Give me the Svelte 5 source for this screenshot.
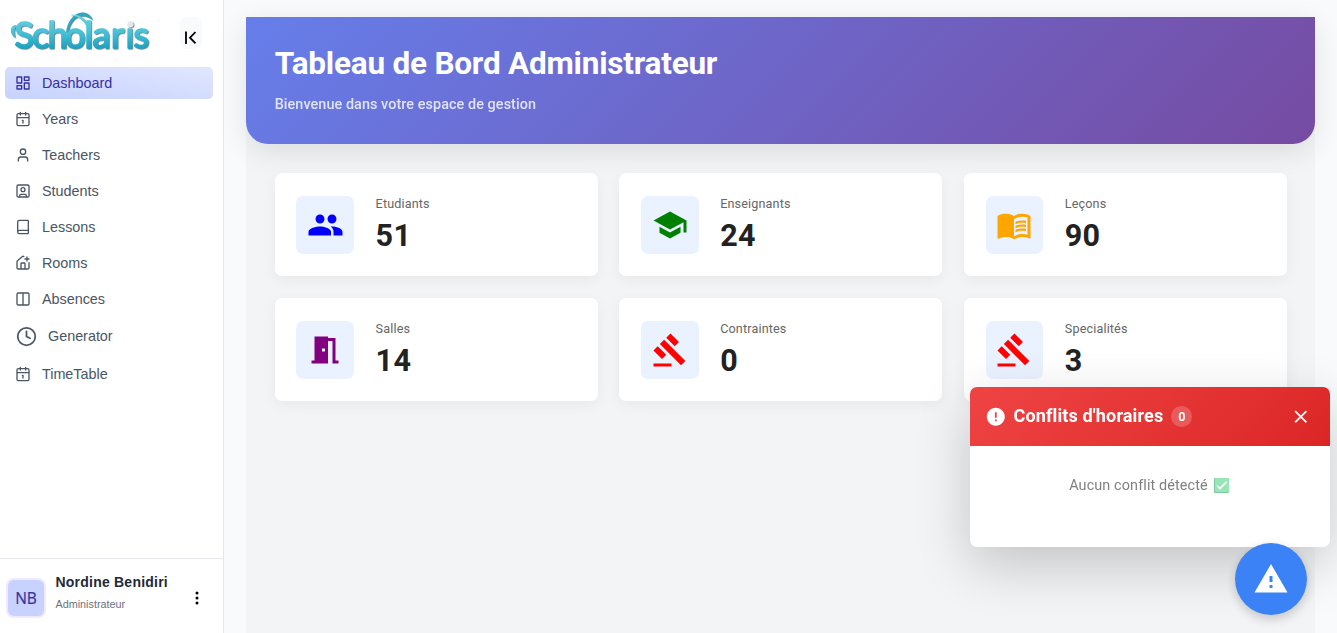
<script>
  const nav = [
    { label: 'Dashboard', icon: 'dashboard', active: true },
    { label: 'Years', icon: 'calendar' },
    { label: 'Teachers', icon: 'user' },
    { label: 'Students', icon: 'student' },
    { label: 'Lessons', icon: 'book' },
    { label: 'Rooms', icon: 'house' },
    { label: 'Absences', icon: 'columns' },
    { label: 'Generator', icon: 'clock' },
    { label: 'TimeTable', icon: 'calendar' }
  ];
  const outline = {
    dashboard: 'M3 3h7v9H3z M14 3h7v5h-7z M14 12h7v9h-7z M3 16h7v5H3z',
    calendar: 'M5 4h14a2 2 0 0 1 2 2v14a2 2 0 0 1-2 2H5a2 2 0 0 1-2-2V6a2 2 0 0 1 2-2z M16 2v4 M3 10h18 M8 2v4 M11 14h1v4',
    user: 'M19 21v-2a4 4 0 0 0-4-4H9a4 4 0 0 0-4 4v2 M16 7a4 4 0 1 1-8 0a4 4 0 0 1 8 0z',
    student: 'M5 3h14a2 2 0 0 1 2 2v14a2 2 0 0 1-2 2H5a2 2 0 0 1-2-2V5a2 2 0 0 1 2-2z M15 10a3 3 0 1 1-6 0a3 3 0 0 1 6 0z M7 21v-2a2 2 0 0 1 2-2h6a2 2 0 0 1 2 2v2',
    book: 'M4 19.5v-15A2.5 2.5 0 0 1 6.5 2H19a1 1 0 0 1 1 1v18a1 1 0 0 1-1 1H6.5a1 1 0 0 1 0-5H20',
    house: 'M13.22 2.416a2 2 0 0 0-2.511.057l-7 5.999A2 2 0 0 0 3 10v9a2 2 0 0 0 2 2h14a2 2 0 0 0 2-2v-7.354 M15 21v-8a1 1 0 0 0-1-1h-4a1 1 0 0 0-1 1v8 M15 6h6 M18 3v6',
    columns: 'M5 3h14a2 2 0 0 1 2 2v14a2 2 0 0 1-2 2H5a2 2 0 0 1-2-2V5a2 2 0 0 1 2-2z M12 3v18',
    clock: 'M22 12a10 10 0 1 1-20 0a10 10 0 0 1 20 0z M12 6v6l4 2'
  };
  const people = 'M8.67 11c1.66 0 2.99-1.34 2.99-3S10.33 5 8.67 5s-3 1.34-3 3 1.34 3 3 3m8 0c1.66 0 2.99-1.34 2.99-3s-1.33-3-2.99-3-3 1.34-3 3 1.34 3 3 3m-8 2C6.33 13 1 14.17 1 16.5V19h15v-2.5c0-2.33-5-3.5-7.33-3.5m8 0c-.29 0-.62.02-.97.05 1.16.84 1.97 1.97 1.97 3.45V19h6v-2.5c0-2.33-4.67-3.5-7-3.5';
  const gavel = 'M1 21h12v2H1zM5.245 8.07l2.83-2.827 14.14 14.142-2.828 2.828zM12.317 1l5.657 5.656-2.83 2.83-5.654-5.66zM3.825 9.485l5.657 5.657-2.828 2.828-5.657-5.657z';
  const cards = [
    { label: 'Etudiants', value: 51, color: '#0000ff', d: people },
    { label: 'Enseignants', value: 24, color: '#008000', d: 'M5 13.18v4L12 21l7-3.82v-4L12 17zM12 3 1 9l11 6 9-4.91V17h2V9z' },
    { label: 'Leçons', value: 90, color: '#ffa500', d: 'M21 5c-1.11-.35-2.33-.5-3.5-.5-1.95 0-4.05.4-5.5 1.5-1.45-1.1-3.55-1.5-5.5-1.5S2.45 4.9 1 6v14.65c0 .25.25.5.5.5.1 0 .15-.05.25-.05C3.1 20.45 5.05 20 6.5 20c1.95 0 4.05.4 5.5 1.5 1.35-.85 3.8-1.5 5.5-1.5 1.65 0 3.35.3 4.75 1.05.1.05.15.05.25.05.25 0 .5-.25.5-.5V6c-.6-.45-1.25-.75-2-1m0 13.5c-1.1-.35-2.3-.5-3.5-.5-1.7 0-4.15.65-5.5 1.5V8c1.35-.85 3.8-1.5 5.5-1.5 1.2 0 2.4.15 3.5.5z M17.5 10.5c.88 0 1.73.09 2.5.26V9.24c-.79-.15-1.64-.24-2.5-.24-1.7 0-3.24.29-4.5.83v1.66c1.13-.64 2.7-.99 4.5-.99M13 12.49v1.66c1.13-.64 2.7-.99 4.5-.99.88 0 1.73.09 2.5.26V11.9c-.79-.15-1.64-.24-2.5-.24-1.7 0-3.24.3-4.5.83m4.5 1.84c-1.7 0-3.24.29-4.5.83v1.66c1.13-.64 2.7-.99 4.5-.99.88 0 1.73.09 2.5.26v-1.52c-.79-.16-1.64-.24-2.5-.24' },
    { label: 'Salles', value: 14, color: '#800080', d: 'M14 6v15H3v-2h2V3h9v1h5v15h2v2h-4V6zm-4 5v2h2v-2z' },
    { label: 'Contraintes', value: 0, color: '#ff0000', d: gavel },
    { label: 'Specialités', value: 3, color: '#ff0000', d: gavel }
  ];
</script>

<div class="app">
  <aside>
    <div class="brand">
      <svg class="logo" width="148" height="46" viewBox="6 8 148 46" role="img" aria-label="Scholaris">
        <defs>
          <linearGradient id="teal" x1="0" y1="14" x2="0" y2="50" gradientUnits="userSpaceOnUse">
            <stop offset="0" stop-color="#6fd5e4" /><stop offset=".5" stop-color="#49c1d7" /><stop offset="1" stop-color="#169fbe" />
          </linearGradient>
          <filter id="edge" x="-5%" y="-10%" width="110%" height="125%">
            <feDropShadow dx=".8" dy=".7" stdDeviation=".5" flood-color="#234e5d" flood-opacity=".8" />
          </filter>
        </defs>
        <g filter="url(#edge)" fill="url(#teal)">
          <path d="M15 25C9.500 26 9.500 35 15.500 38C14 34 14 29 16.500 25.500Z" />
          <text class="wordmark" x="14.500 32 47.500 65 84.500 92.500 111 125.500 133.500" y="47.500" stroke="url(#teal)" stroke-width="1.600" stroke-linejoin="round">Scholarıs</text>
          <path d="M66 33C67 21 74 13 82 12.500C87 12.500 91 15 92.500 20C89 17 85 15.500 81 16C74 17.500 69.500 24 68.500 32Z" fill="#2fa9c3" />
          <path d="M70.500 15C80 13.500 90 20 90.500 33L88 31C86.500 22 80 16.500 70.500 15Z" />
          <circle cx="130.500" cy="24.300" r="3" fill="#e3e7e8" />
        </g>
      </svg>
      <button class="collapse" aria-label="Collapse">
        <svg width="20" height="20" viewBox="0 0 20 20" fill="none" stroke="#000" stroke-width="1.800"><path d="M5 3.500v12.500M14.500 4L9 9.700l5.500 5.700" /></svg>
      </button>
    </div>
    <nav>
      {#each nav as item}
        <a class:active={item.active} class:large={item.icon === 'clock'}>
          <svg viewBox="0 0 24 24" fill="none" stroke="currentColor" stroke-width="2" stroke-linecap="round" stroke-linejoin="round"><path d={outline[item.icon]} /></svg>
          <span>{item.label}</span>
        </a>
      {/each}
    </nav>
    <footer>
      <div class="avatar">NB</div>
      <div class="who"><strong>Nordine Benidiri</strong><span>Administrateur</span></div>
      <svg class="more" width="16" height="16" viewBox="0 0 16 16"><circle cx="8" cy="3" r="1.500" /><circle cx="8" cy="8" r="1.500" /><circle cx="8" cy="13" r="1.500" /></svg>
    </footer>
  </aside>

  <main>
    <div class="page">
      <header>
        <h1>Tableau de Bord Administrateur</h1>
        <p>Bienvenue dans votre espace de gestion</p>
      </header>
      <section class="cards">
        {#each cards as card}
          <article>
            <div class="tile" style:color={card.color}>
              <svg width="36" height="36" viewBox="0 0 24 24" fill="currentColor"><path d={card.d} /></svg>
            </div>
            <div class="stat"><span>{card.label}</span><strong>{card.value}</strong></div>
          </article>
        {/each}
      </section>
    </div>
  </main>

  <div class="panel">
    <div class="panel-head">
      <svg width="21.600" height="21.600" viewBox="0 0 24 24" fill="#fff"><path d="M12 2C6.480 2 2 6.480 2 12s4.480 10 10 10 10-4.480 10-10S17.520 2 12 2m1 15h-2v-2h2zm0-4h-2V7h2z" /></svg>
      <h2>Conflits d'horaires</h2>
      <span class="badge">0</span>
      <svg class="close" width="21.600" height="21.600" viewBox="0 0 24 24" fill="#fff"><path d="M19 6.410 17.590 5 12 10.590 6.410 5 5 6.410 10.590 12 5 17.590 6.410 19 12 13.410 17.590 19 19 17.590 13.410 12z" /></svg>
    </div>
    <div class="panel-body">
      <span>Aucun conflit détecté</span>
      <svg width="15" height="15" viewBox="0 0 15 15"><rect width="15" height="15" rx="1" fill="#7fc9a0" /><rect x="1" width="14" height="14" rx="1" fill="#98e5b5" /><path d="M3 7.500l3 3 6.500-6.700" fill="none" stroke="#fff" stroke-width="1.700" /></svg>
    </div>
  </div>
  <button class="fab" aria-label="Conflits">
    <svg width="36" height="36" viewBox="0 0 24 24" fill="#fff"><path d="M1 21h22L12 2zm12-3h-2v-2h2zm0-4h-2v-4h2z" /></svg>
  </button>
</div>

<style>
  :global(body) { background: #f9fafb; overflow: hidden; }
  * { box-sizing: border-box; }
  h1, h2, p { margin: 0; }
  button { border: 0; padding: 0; }
  svg { display: block; flex: none; }
  .app { display: flex; height: 633px; background: #f9fafc; font-family: Roboto, sans-serif; overflow: hidden; }
  aside { width: 224px; flex: none; background: #fff; border-right: 1px solid #e5e7eb; display: flex; flex-direction: column; font-family: "Liberation Sans", Arial, sans-serif; }
  .brand { height: 67px; display: flex; align-items: flex-start; padding: 8px 0 0 6px; }
  .logo { overflow: visible; }
  .wordmark { font: 400 36px Lato, sans-serif; }
  .collapse { width: 22px; height: 32px; margin: 9px 0 0 26px; border-radius: 7px; background: #f9fafb; display: grid; place-items: center; padding-top: 9px; }
  nav { padding: 0 10px 0 5px; display: flex; flex-direction: column; gap: 4px; flex: 1; }
  nav a { height: 32px; display: flex; align-items: center; gap: 10.800px; padding-left: 10.200px; border-radius: 5px; color: #4b5563; font-size: 14.400px; letter-spacing: -.02px; }
  nav a svg { width: 16px; height: 16px; }
  nav a.large { height: 35px; gap: 11.500px; padding: 0 0 1px 10.500px; }
  nav a.large svg { width: 21px; height: 21px; }
  nav a.active { color: #3730a3; background: linear-gradient(to top right, #c7d2fe, #e0e7ff); }
  footer { height: 75px; border-top: 1px solid #e5e7eb; display: flex; align-items: flex-start; }
  .avatar { width: 36px; height: 36px; margin: 21px 0 0 8px; border-radius: 6px; background: #c7d2fe; box-shadow: 0 0 0 2px #f3e8ff; display: grid; place-items: center; font: 400 15.500px "Open Sans", sans-serif; color: #3730a3; -webkit-text-stroke: .2px #3730a3; }
  .who { width: 130px; margin: 14px 0 0 11.500px; display: flex; flex-direction: column; gap: 4px; white-space: nowrap; }
  .who strong { font-size: 14px; line-height: 18px; letter-spacing: .22px; color: #1f2937; }
  .who span { font-size: 10.800px; line-height: 18px; color: #6b7280; }
  .more { margin: 31px 0 0 3.500px; }
  main { flex: 1; padding: 17px 22px 0; }
  .page { height: 616px; background: #f3f4f6; }
  header { height: 127px; padding: 28px 28.700px; border-radius: 0 0 22px 22px; background: linear-gradient(135deg, #667eea 0%, #764ba2 100%); box-shadow: 0 7px 29px rgba(0,0,0,.1); color: #fff; }
  h1 { font-size: 31.500px; line-height: 38px; font-weight: 700; letter-spacing: -.21px; }
  header p { font-size: 14.400px; line-height: 22px; margin-top: 11px; opacity: .8; font-weight: 500; letter-spacing: .07px; }
  .cards { display: grid; grid-template-columns: repeat(3, 323px); gap: 22px 21.600px; padding: 29px 0 29px 28.800px; }
  article { height: 103px; border-radius: 7px; background: #fff; box-shadow: 0 4px 14px rgba(0,0,0,.05); display: flex; align-items: flex-start; gap: 22px; padding: 23px 21.600px; }
  .tile { width: 57.600px; height: 57.600px; border-radius: 7px; background: #ebf2ff; display: grid; place-items: center; flex: none; }
  .stat { display: flex; flex-direction: column; margin-left: -.4px; }
  .stat span { font-size: 12.600px; line-height: 16px; color: #666; letter-spacing: .15px; }
  .stat strong { font-size: 30.500px; line-height: 38px; margin-top: 4.500px; color: #222; letter-spacing: .3px; }
  .panel { position: fixed; left: 970px; top: 387px; width: 360px; height: 160px; border-radius: 7px; overflow: hidden; background: #fff; box-shadow: 0 18px 54px rgba(0,0,0,.2); }
  .panel-head { height: 59px; padding: 0 18.500px 0 14.600px; display: flex; align-items: center; background: linear-gradient(135deg, #ef4444, #dc2626); color: #fff; }
  h2 { font-size: 18px; font-weight: 700; line-height: 26px; margin: -2px 0 0 7.300px; letter-spacing: .14px; }
  .badge { width: 21px; height: 21px; border-radius: 50%; margin: -1px 0 0 8px; display: grid; place-items: center; background: rgba(255,255,255,.2); font-size: 12.600px; font-weight: 700; }
  .close { margin-left: auto; }
  .panel-body { display: flex; justify-content: center; align-items: center; gap: 6px; padding-top: 29px; font-size: 14.400px; line-height: 20px; color: #808080; letter-spacing: .12px; }
  .panel-body span { margin-top: 1px; }
  .panel-body svg { margin-right: 2px; }
  .fab { position: fixed; left: 1235px; top: 543px; width: 72px; height: 72px; border-radius: 50%; background: #3b82f6; box-shadow: 0 4px 11px rgba(0,0,0,.2); display: grid; place-items: center; }
</style>
